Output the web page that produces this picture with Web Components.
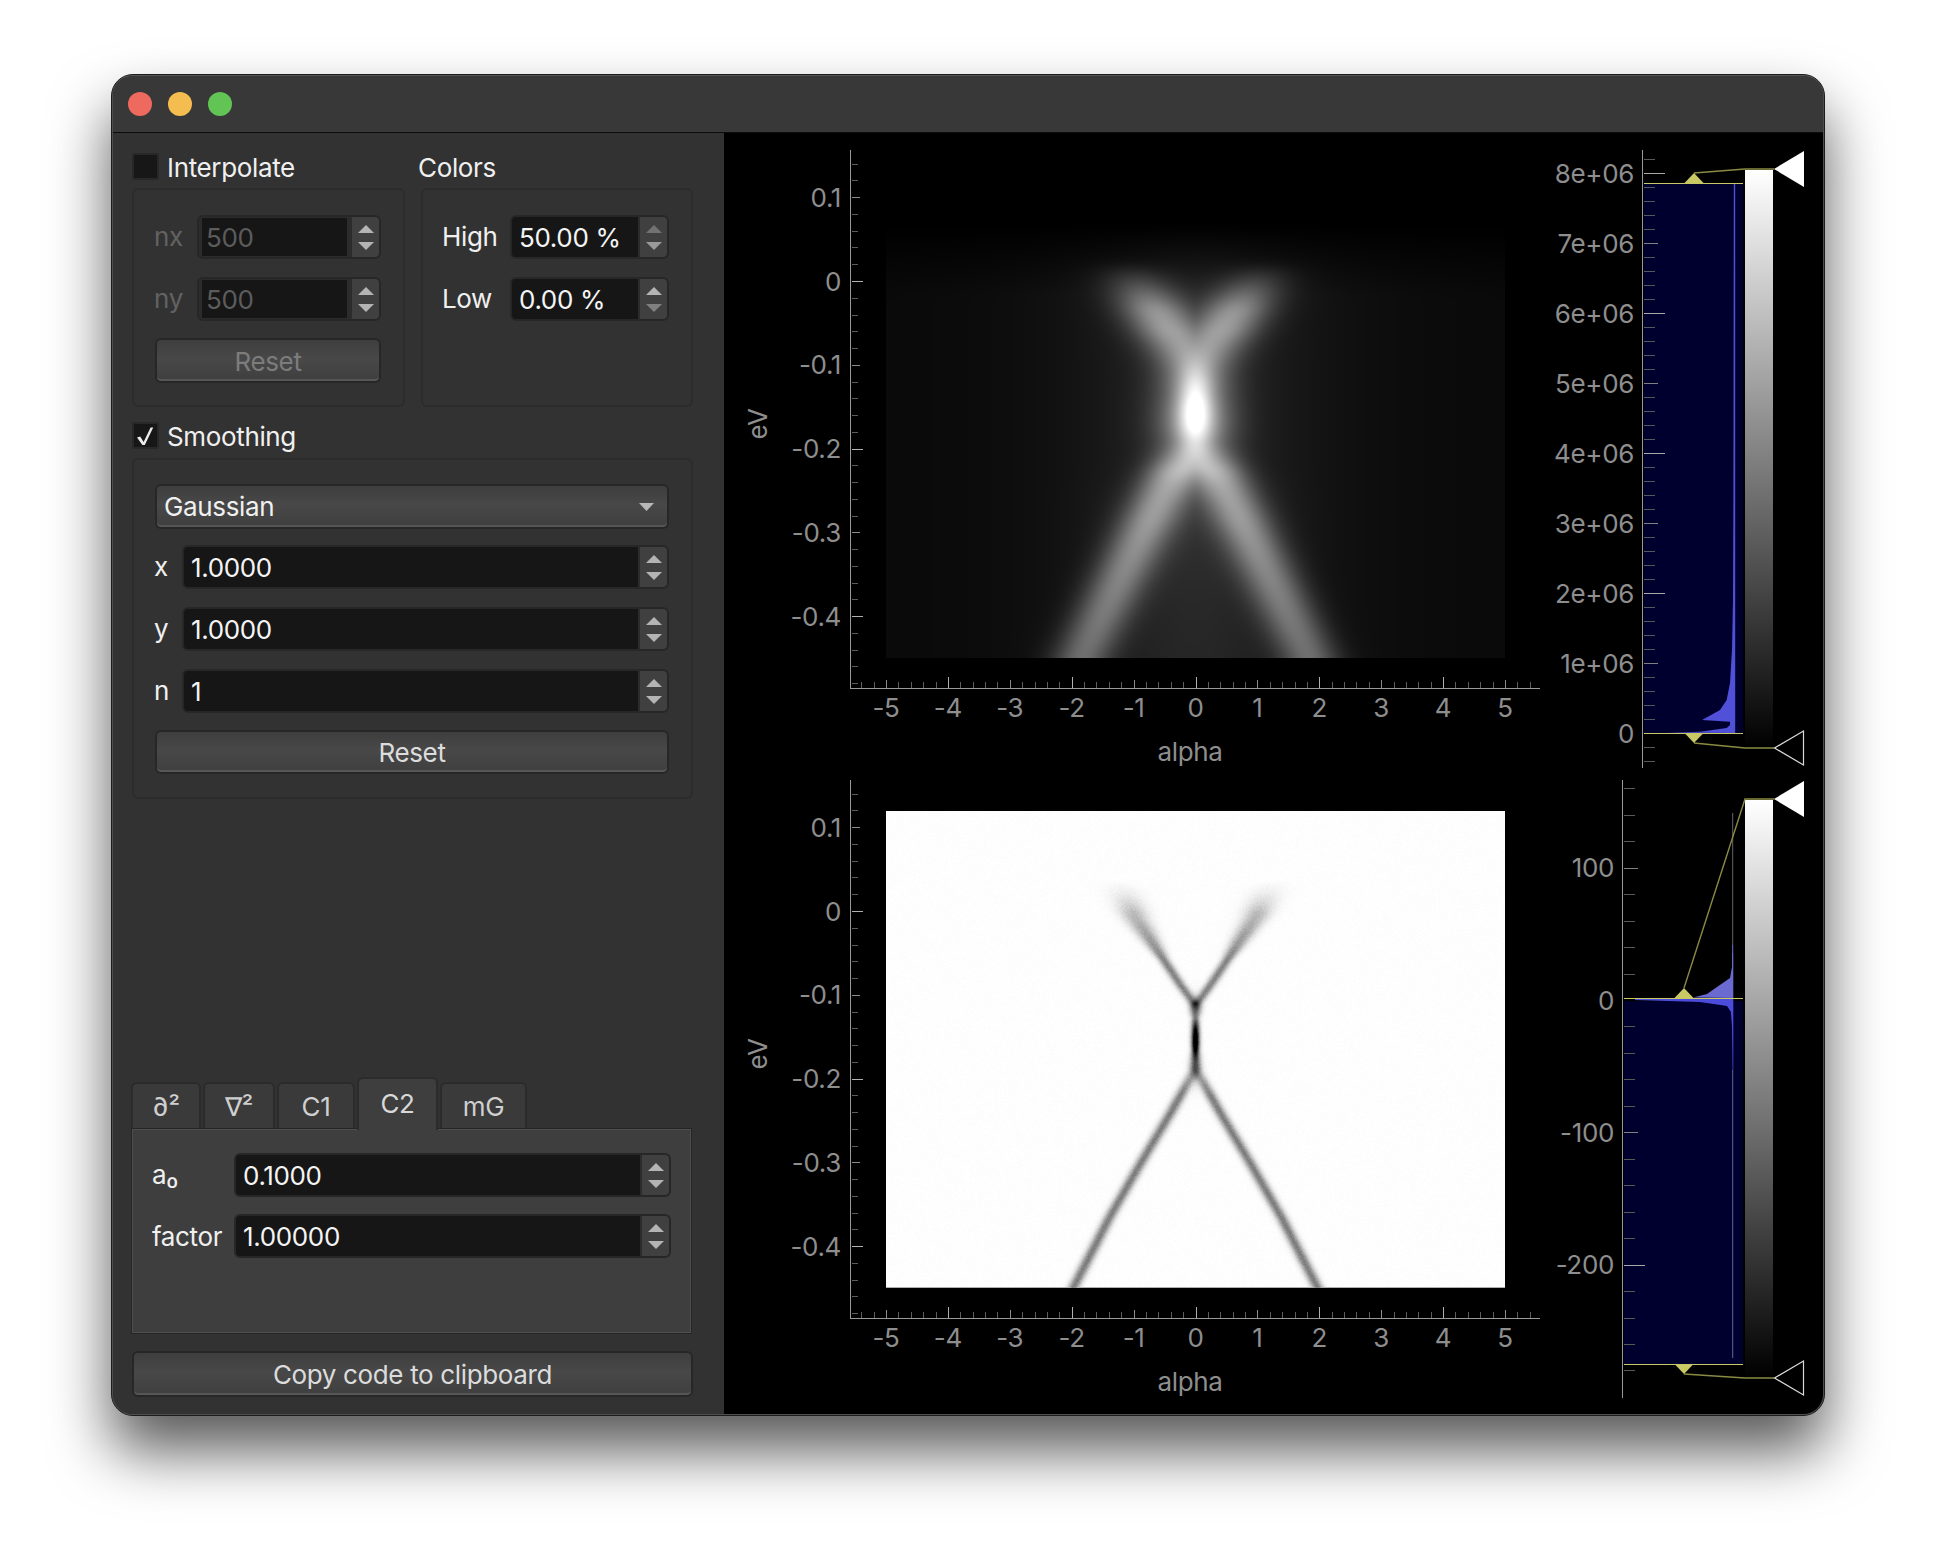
<!doctype html>
<html>
<head>
<meta charset="utf-8">
<title>Filters</title>
<style>
  html,body{margin:0;background:#fff}
  body{padding:74px 0 0 111px;width:1825px;height:1490px;overflow:hidden}
</style>
</head>
<body>
<app-window>
  <control-panel slot="left">
    <group-row>
      <group-box title="Interpolate" check="off" style="--box-h:219px;--pad:25px 22px 0 20px">
        <form-row label="nx" width="43" disabled><spin-box value="500" disabled></spin-box></form-row>
        <form-row label="ny" width="43" disabled><spin-box value="500" disabled></spin-box></form-row>
        <push-button disabled style="margin:-1px 0 0 1px;height:45px">Reset</push-button>
      </group-box>
      <group-box title="Colors" style="--box-h:219px;--pad:25px 22px 0 19px">
        <form-row label="High" width="68"><spin-box value="50.00 %" dim="up"></spin-box></form-row>
        <form-row label="Low" width="68"><spin-box value="0.00 %" dim="down"></spin-box></form-row>
      </group-box>
    </group-row>
    <group-box title="Smoothing" check="on" style="--box-h:341px;--pad:24px 22px 0 20px;--head-gap:9px">
      <combo-box style="margin:0 0 -2px 1px">Gaussian</combo-box>
      <form-row label="x" width="28"><spin-box value="1.0000"></spin-box></form-row>
      <form-row label="y" width="28"><spin-box value="1.0000"></spin-box></form-row>
      <form-row label="n" width="28"><spin-box value="1"></spin-box></form-row>
      <push-button style="margin:-1px 0 0 1px;height:44px">Reset</push-button>
    </group-box>
    <tab-widget tabs="∂²:70,∇²:72,C1:78,C2:81,mG:87" active="3">
      <form-row label="a₀" width="82"><spin-box value="0.1000"></spin-box></form-row>
      <form-row label="factor" width="82" style="--label-shift:1px"><spin-box value="1.00000"></spin-box></form-row>
    </tab-widget>
    <push-button style="margin:17px 0 0 0;height:46px;width:561px">Copy code to clipboard</push-button>
  </control-panel>
  <plot-pane slot="right">
    <image-plot variant="smooth"></image-plot>
    <level-hist variant="top"></level-hist>
    <image-plot variant="curvature"></image-plot>
    <level-hist variant="bottom"></level-hist>
  </plot-pane>
</app-window>

<script>
// shared text setup, everything inherits it from the window
const FONT = `Inter,"Liberation Sans","Noto Sans",sans-serif`;

class AppWindow extends HTMLElement{
  constructor(){
    super();
    this.attachShadow({mode:'open'}).innerHTML = `
      <style>
        :host{display:block;box-sizing:border-box;width:1714px;height:1342px;border:1px solid #1c1c1c;border-radius:22px;
          box-shadow:0 35px 60px rgba(0,0,0,.65);font:400 26px/1.2 ${FONT};letter-spacing:-.35px;color:#f0f0f0;background:#323232}
        .frame{height:100%;border:1px solid #4e4e4e;border-top-color:#555;border-radius:21px;overflow:hidden;box-sizing:border-box;display:flex;flex-direction:column}
        .bar{flex:none;height:56px;background:#383838;border-bottom:1px solid #0c0c0c;display:flex;align-items:center;gap:16px;padding-left:15px}
        .bar i{width:24px;height:24px;border-radius:50%}
        .main{flex:1;display:flex;min-height:0}
      </style>
      <div class="frame">
        <div class="bar"><i style="background:#ee6a5f"></i><i style="background:#f5bd4f"></i><i style="background:#61c454"></i></div>
        <div class="main"><slot name="left"></slot><slot name="right"></slot></div>
      </div>`;
  }
}
customElements.define('app-window', AppWindow);

class ControlPanel extends HTMLElement{
  constructor(){
    super();
    this.attachShadow({mode:'open'}).innerHTML = `
      <style>
        :host{display:flex;flex-direction:column;flex:none;box-sizing:border-box;width:611px;height:100%;padding:20px 31px 17px 19px;background:#323232}
        ::slotted(tab-widget){margin-top:auto}
      </style><slot></slot>`;
  }
}
customElements.define('control-panel', ControlPanel);

class GroupRow extends HTMLElement{
  constructor(){
    super();
    this.attachShadow({mode:'open'}).innerHTML = `
      <style>:host{display:grid;grid-template-columns:273px 272px;gap:16px;margin-bottom:15px}</style><slot></slot>`;
  }
}
customElements.define('group-row', GroupRow);

class GroupBox extends HTMLElement{
  constructor(){
    super();
    const check = this.getAttribute('check');
    const mark = check==='on' ? `<svg width="27" height="27" viewBox="0 0 27 27"><path d="M5 15.5l3.2-1 3.4 5.6L18.6 5.5h2.6L12.8 23h-2.4z" fill="#ececec"/></svg>` : '';
    const box = check ? `<span class="check">${mark}</span>` : '';
    this.attachShadow({mode:'open'}).innerHTML = `
      <style>
        :host{display:block}
        .head{display:flex;align-items:center;height:27px;gap:8px;margin-bottom:var(--head-gap,8px)}
        .head span:last-child{padding-top:2px}
        .check{width:27px;height:27px;box-sizing:border-box;background:#171717;border:2px solid #282828;border-radius:2px;flex:none;position:relative}
        .check svg{position:absolute;left:-2px;top:-2px}
        .plain{margin-left:-3px}
        .box{box-sizing:border-box;height:var(--box-h);padding:var(--pad);border:2px solid #2c2c2c;border-radius:6px;display:flex;flex-direction:column;gap:18px}
      </style>
      <div class="head">${box}<span class="${check?'':'plain'}">${this.getAttribute('title')}</span></div>
      <div class="box"><slot></slot></div>`;
    this.removeAttribute('title');
  }
}
customElements.define('group-box', GroupBox);

class FormRow extends HTMLElement{
  constructor(){
    super();
    const dis = this.hasAttribute('disabled');
    this.attachShadow({mode:'open'}).innerHTML = `
      <style>
        :host{display:flex;align-items:center;height:44px}
        .l{flex:none;width:${this.getAttribute('width')}px;padding-top:var(--label-shift,0);color:${dis?'#626262':'#f0f0f0'}}
        ::slotted(spin-box){flex:1;min-width:0}
      </style><span class="l">${this.getAttribute('label')}</span><slot></slot>`;
  }
}
customElements.define('form-row', FormRow);

class SpinBox extends HTMLElement{
  constructor(){
    super();
    const dis = this.hasAttribute('disabled'), dim = this.getAttribute('dim');
    const up = dim==='up' ? '#727272' : '#b4b4b4', down = dim==='down' ? '#808080' : (dim==='up' ? '#9a9a9a' : '#b4b4b4');
    this.attachShadow({mode:'open'}).innerHTML = `
      <style>
        :host{display:flex;box-sizing:border-box;height:44px;border:2px solid #272727;border-radius:6px;background:#2c2c2c;overflow:hidden}
        .v{flex:1;min-width:0;display:flex;align-items:center;background:#161616;padding:1px 0 0 ${dis?'4px':'7px'};margin:${dis?'1px 0 1px 3px':'0'};color:${dis?'#5c5c5c':'#f4f4f4'}}
        .s{flex:none;width:27px;margin-left:${dis?'5px':'2px'};background:#404040;border-radius:0 3px 3px 0;display:flex;align-items:center;justify-content:center}
      </style>
      <span class="v">${this.getAttribute('value')}</span>
      <span class="s"><svg width="16" height="25" viewBox="0 0 16 25"><path d="M8 0l8 8H0z" fill="${up}"/><path d="M0 17h16l-8 8z" fill="${down}"/></svg></span>`;
  }
}
customElements.define('spin-box', SpinBox);

class PushButton extends HTMLElement{
  constructor(){
    super();
    const dis = this.hasAttribute('disabled');
    this.attachShadow({mode:'open'}).innerHTML = `
      <style>
        :host{display:flex;align-items:center;justify-content:center;box-sizing:border-box;padding-top:2px;border:2px solid #272727;border-radius:6px;
          background:linear-gradient(#3e3e3e,#484848 45%,#3f3f3f);box-shadow:inset 0 -2px 0 #565656;color:${dis?'#7c7c7c':'#dcdcdc'}}
      </style><slot></slot>`;
  }
}
customElements.define('push-button', PushButton);

class ComboBox extends HTMLElement{
  constructor(){
    super();
    this.attachShadow({mode:'open'}).innerHTML = `
      <style>
        :host{display:flex;align-items:center;justify-content:space-between;box-sizing:border-box;height:45px;padding:0 13px 0 7px;border:2px solid #272727;border-radius:6px;
          background:linear-gradient(#3e3e3e,#484848 45%,#3f3f3f);box-shadow:inset 0 -2px 0 #565656;color:#f0f0f0}
      </style><slot></slot><svg width="15" height="8" viewBox="0 0 15 8"><path d="M0 0h15L7.5 8z" fill="#b8b8b8"/></svg>`;
  }
}
customElements.define('combo-box', ComboBox);

class TabWidget extends HTMLElement{
  constructor(){
    super();
    const active = +this.getAttribute('active');
    const tabs = this.getAttribute('tabs').split(',').map((t,i)=>{
      const [name,w] = t.split(':');
      return `<span class="tab${i===active?' on':''}" style="width:${w}px">${name}</span>`;
    }).join('');
    this.attachShadow({mode:'open'}).innerHTML = `
      <style>
        :host{display:block;width:561px;margin-left:-1px}
        .bar{display:flex;align-items:flex-end;gap:2px;height:51px;position:relative;z-index:1}
        .tab{box-sizing:border-box;height:46px;display:flex;align-items:center;justify-content:center;background:#3a3a3a;border:2px solid #2b2b2b;border-bottom:0;border-radius:6px 6px 0 0;color:#cfcfcf;padding-top:2px}
        .tab.on{height:53px;margin-bottom:-2px;padding-top:0;padding-bottom:2px;background:#3e3e3e;color:#d8d8d8}
        .pane{box-sizing:border-box;height:206px;padding:24px 20px 0 20px;background:#3e3e3e;border:1px solid #262626;box-shadow:inset 0 0 0 1px #4e4e4e;display:flex;flex-direction:column;gap:17px}
      </style>
      <div class="bar">${tabs}</div>
      <div class="pane"><slot></slot></div>`;
  }
}
customElements.define('tab-widget', TabWidget);

class PlotPane extends HTMLElement{
  constructor(){
    super();
    this.attachShadow({mode:'open'}).innerHTML = `
      <style>
        :host{display:grid;flex:1;grid-template-columns:876px 1fr;grid-template-rows:630px 630px;background:#000;height:100%;overflow:hidden}
      </style><slot></slot>`;
  }
}
customElements.define('plot-pane', PlotPane);

const gauss = (d,s)=>Math.exp(-.5*d*d/(s*s));
const clamp = v=>Math.max(0,Math.min(1,v));
const ramp = (v,a,b)=>clamp((v-a)/(b-a));
const line = (x1,y1,x2,y2,c)=>`<line x1="${x1}" y1="${y1}" x2="${x2}" y2="${y2}" stroke="${c}"/>`;
// piecewise linear lookup in [[y,value],...] sorted by y
const lookup = (tab,y)=>{
  for(let i=1;i<tab.length;i++) if(y<=tab[i][0]){
    const [a,va]=tab[i-1], [b,vb]=tab[i];
    return va+(vb-va)*(y-a)/(b-a);
  }
  const [a,va]=tab[tab.length-2], [b,vb]=tab[tab.length-1];
  return vb+(vb-va)*(y-b)/(b-a);
};

// smoothed intensity, y in screen px of the first row
function smoothed(dx,y){
  const ax = Math.abs(dx);
  const fy = ramp(y,225,295);
  const bg = (.03+.03*Math.exp(-((dx/260)**2))+.08*Math.exp(-((dx/110)**2)))*fy;
  const fLow = y>443 ? .49*Math.sqrt((y-423)**2-20**2) : 0;
  const aLow = (.36+.1*(1-ramp(y,520,650)))*ramp(y,440,470);
  const low = aLow*gauss(ax-fLow,20);
  const fUp = y<375 ? .62*(375-y) : 0;
  const up = .46*ramp(y,262,310)*(1-ramp(y,330,395))*gauss(ax-fUp,24);
  const sy = y<420 ? 66 : 50;
  const blob = .55*Math.exp(-((dx/36)**2)-((y-420)/sy)**2);
  const sharp = .5*gauss(dx,11)*gauss(y-410,30);
  const halo = .1*Math.exp(-((dx/70)**2))*Math.exp(-Math.max(0,y-470)/80)*ramp(y,470,520);
  return bg+low+up+blob+sharp+halo;
}

// box blur, two passes each way, takes the creases out of the model
function soften(a,w,h,r){
  const b = new Float32Array(a.length);
  const pass = (src,dst,n,m,at)=>{
    for(let j=0;j<m;j++){
      let s=0;
      for(let i=-r;i<=r;i++) s+=src[at(Math.max(0,Math.min(n-1,i)),j)];
      for(let i=0;i<n;i++){
        dst[at(i,j)] = s/(2*r+1);
        s += src[at(Math.min(n-1,i+r+1),j)]-src[at(Math.max(0,i-r),j)];
      }
    }
  };
  for(let k=0;k<2;k++){
    pass(a,b,w,h,(i,j)=>j*w+i);
    pass(b,a,h,w,(i,j)=>i*w+j);
  }
  return a;
}

// curvature map, y in screen px of the second row. returns grey level
let seed = 7;
const rnd = ()=>(seed = (seed*16807)%2147483647)/2147483647;
const LOWER = [[1068,0],[1111,24],[1163,55],[1217,86],[1287,122]];
const UPPER = [[860,88],[890,72],[917,60],[950,38],[983,16],[1005,0]];
function curvature(dx,y){
  const fLow = y>1068 ? lookup(LOWER,y) : 0;
  const a1 = (.3+.2*ramp(y,1068,1095))*ramp(y,1050,1068);
  const d1 = a1*(gauss(dx-fLow,4.2)+gauss(dx+fLow,4.2));
  const k = ramp(960-y,0,70);
  const fUp = y<1005 ? lookup(UPPER,y) : 0;
  const a2 = .48*(1-.66*k)*ramp(y,880,912)*(1-ramp(y,1003,1018));
  const d2 = a2*(gauss(dx-fUp,4+8*k)+gauss(dx+fUp,4+8*k));
  const d3 = gauss(dx,2.6)*gauss(y-1040,16)+.25*gauss(dx,3.4)*gauss(y-1040,22);
  const d = 1-(1-clamp(d1))*(1-clamp(d2))*(1-clamp(d3));
  const n = (rnd()-.5)*(.2*d*(1-d)+.016);
  return 255*clamp(.995-d+n);
}

class ImagePlot extends HTMLElement{
  constructor(){
    super();
    this.attachShadow({mode:'open'});
  }
  connectedCallback(){
    let t = '';
    const gy = v=>Math.round(281-838*v)+.5, gx = v=>Math.round(1195.5+61.9*v)+.5;
    for(let i=-24;i<=7;i++){
      const v=i/50, y=gy(v), big=i%10===0, mid=i%5===0;
      t += line(852,y,big?863:mid?860:858,y,big?'#b0b0b0':mid?'#8a8a8a':'#5c5c5c');
    }
    for(let i=-27;i<=27;i++){
      const x=gx(i/5), even=i%10===0, odd=i%5===0;
      t += line(x,even?677:odd?680:682,x,688,even?'#b0b0b0':odd?'#8a8a8a':'#5c5c5c');
    }
    const labels = [[.1,'0.1'],[0,'0'],[-.1,'-0.1'],[-.2,'-0.2'],[-.3,'-0.3'],[-.4,'-0.4']]
      .map(([v,s])=>`<text x="841" y="${281-838*v+9.5}" text-anchor="end">${s}</text>`).join('');
    let xl = '';
    for(let v=-5;v<=5;v++) xl += `<text x="${1195.5+61.9*v}" y="716.5" text-anchor="middle">${v}</text>`;
    this.shadowRoot.innerHTML = `
      <style>
        :host{display:block;position:relative;width:876px;height:630px}
        svg{display:block;overflow:visible}
        canvas{position:absolute;left:162px;top:48px}
        text{font:400 26px ${FONT};letter-spacing:-.35px;fill:#8e8e8e}
      </style>
      <svg width="876" height="630" viewBox="724 133 876 630">
        <g shape-rendering="crispEdges">${t}
          ${line(850.5,150,850.5,689,'#999')}${line(850,688.5,1540,688.5,'#999')}</g>
        ${labels}${xl}
        <text x="1190" y="761" text-anchor="middle">alpha</text>
        <text transform="translate(767 424) rotate(-90)" text-anchor="middle">eV</text>
      </svg>
      <canvas width="619" height="477"></canvas>`;
    this.paint();
  }
  paint(){
    const c = this.shadowRoot.querySelector('canvas').getContext('2d');
    const w = 619, h = 477, img = c.createImageData(w,h), smooth = this.getAttribute('variant')==='smooth';
    const vals = new Float32Array(w*h);
    for(let j=0;j<h;j++) for(let i=0;i<w;i++){
      const dx = i+886-1195;
      vals[j*w+i] = smooth ? smoothed(dx,j+181) : curvature(dx,j+811);
    }
    if(smooth) soften(vals,w,h,5);
    for(let j=0;j<h;j++) for(let i=0;i<w;i++){
      let g = smooth ? 255*clamp(vals[j*w+i]) : vals[j*w+i];
      if(!smooth && j===h-1) g = Math.min(g,175);
      const p = (j*w+i)*4;
      img.data[p]=img.data[p+1]=img.data[p+2]=g; img.data[p+3]=255;
    }
    c.putImageData(img,0,0);
  }
}
customElements.define('image-plot', ImagePlot);

const HIST = {
  top:{ view:'1600 133 224 630', axis:1642, y0:150, y1:768, barY:[170,748], right:1634, left:1644, base:183, floor:733, hx:1694, top:169,
    y:v=>733-70*v, from:-2, to:41, step:.2, evens:2,
    ticks:[[8,'8e+06'],[7,'7e+06'],[6,'6e+06'],[5,'5e+06'],[4,'4e+06'],[3,'3e+06'],[2,'2e+06'],[1,'1e+06'],[0,'0']],
    hist:`<rect x="1644" y="183" width="99" height="550" fill="#00002e"/>
      <path d="M1733.8 183L1733.4 500L1733 600L1732 650L1730 683L1726.7 700L1720 710L1702 720L1730 721.7L1730 725L1726.7 728L1700 731.7L1667 732.7L1735.2 733L1735.2 183z" fill="#5050d8"/>` },
  bottom:{ view:'1600 763 224 630', axis:1622, y0:780, y1:1398, barY:[800,1378], right:1614, left:1624, base:998, floor:1364, hx:1684, top:799,
    y:v=>1000-1.323*v, from:-14, to:8, step:20, evens:200,
    ticks:[[100,'100'],[0,'0'],[-100,'-100'],[-200,'-200']],
    hist:`<rect x="1624" y="1001" width="119" height="363" fill="#00002e"/>
      <path d="M1693 997.5L1707 994L1717 987L1730 978L1732 967L1732 953L1733.3 953L1733.3 998z" fill="#6a6ad0"/>
      <path d="M1635 1000L1700 1002L1727 1006L1731 1012L1732 1027L1732.6 1070L1733.3 1070L1733.3 998L1635 998.5z" fill="#4c4cdc"/>
      <path d="M1732.7 813V945" stroke="#666" fill="none"/><path d="M1732.7 945V953" stroke="#7272e4" fill="none"/><path d="M1732.7 1070V1358" stroke="#66669c" fill="none"/>` }
};

class LevelHist extends HTMLElement{
  constructor(){
    super();
    const h = HIST[this.getAttribute('variant')];
    let t = '';
    for(let i=h.from;i<=h.to;i++){
      const v = i*h.step, y = Math.round(h.y(v))+.5;
      const big = Math.abs(Math.round(v*5)%Math.round(h.evens*5))===0, mid = Math.abs(Math.round(v*5)%Math.round(h.evens*5/2))===0;
      if(h.axis===1622 && v===0) continue;
      t += line(h.axis+2,y,h.axis+(big?23:mid?16:13),y,big?'#a8a8a8':mid?'#808080':'#585858');
    }
    const labels = h.ticks.map(([v,s])=>`<text x="${h.right}" y="${h.y(v)+9.5}" text-anchor="end">${s}</text>`).join('');
    const [b0,b1] = h.barY, hx = h.hx, lo = h.floor+10;
    const id = 'bar'+this.getAttribute('variant');
    this.attachShadow({mode:'open'}).innerHTML = `
      <style>
        :host{display:block;width:224px;height:630px}
        svg{display:block;overflow:visible}
        text{font:400 26px ${FONT};letter-spacing:-.35px;fill:#8e8e8e}
      </style>
      <svg width="224" height="630" viewBox="${h.view}">
        <defs><linearGradient id="${id}" x1="0" y1="0" x2="0" y2="1"><stop offset="0" stop-color="#fff"/><stop offset="1" stop-color="#000"/></linearGradient></defs>
        ${h.hist}
        <g shape-rendering="crispEdges">${t}${line(h.axis+.5,h.y0,h.axis+.5,h.y1,'#999')}
          ${line(h.left,h.base+.5,1743,h.base+.5,'#c8c864')}${line(h.left,h.floor+.5,1743,h.floor+.5,'#c8c864')}</g>
        <rect x="1745" y="${b0}" width="28" height="${b1-b0}" fill="url(#${id})"/>
        <path d="M${hx} ${h.base-10}L1745 ${h.top}H1774" fill="none" stroke="#8a8a44" stroke-width="1.4"/>
        <path d="M${hx} ${lo}L1745 ${b1}H1774" fill="none" stroke="#8a8a44" stroke-width="1.4"/>
        <path d="M${hx} ${h.base-10}l9.5 10h-19z" fill="#c8c864"/>
        <path d="M${hx} ${lo}l9.5 -10h-19z" fill="#c8c864"/>
        <path d="M1774 ${h.top}L1804 ${h.top-18}V${h.top+18}z" fill="#fff"/>
        <path d="M1774.5 ${b1}L1803.5 ${b1-17}V${b1+17}z" fill="none" stroke="#d8d8d8" stroke-width="1.2"/>
        ${labels}
      </svg>`;
  }
}
customElements.define('level-hist', LevelHist);
</script>
</body>
</html>
